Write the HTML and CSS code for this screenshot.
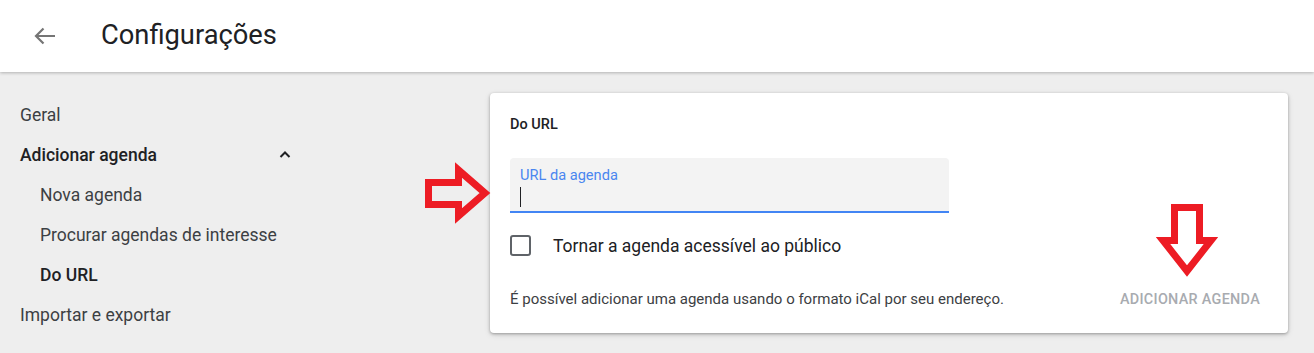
FILE: index.html
```html
<!DOCTYPE html>
<html lang="pt-BR">
    <head>
        <meta charset="UTF-8">
        <meta name="viewport" content="width=device-width, initial-scale=1.0">
        <title>Configurações</title>
        <link rel="stylesheet" href="styles.css">
    </head>
    <body>
        <header class="topbar">
            <button class="back-btn" aria-label="Voltar">
                <svg width="24" height="20" viewBox="0 0 24 20"><path d="M22 10H3M10.5 2.5L3 10l7.5 7.5" fill="none" stroke="#757575" stroke-width="2.2"/></svg>
            </button>
            <h1 class="title">Configurações</h1>
        </header>

        <div class="main">
            <nav class="sidebar">
                <a class="nav-item">Geral</a>
                <a class="nav-item strong">Adicionar agenda
                    <svg class="chevron" width="12" height="8" viewBox="0 0 12 8"><path d="M1.5 7L6 2.5 10.5 7" fill="none" stroke="#202124" stroke-width="2"/></svg>
                </a>
                <a class="nav-item sub">Nova agenda</a>
                <a class="nav-item sub">Procurar agendas de interesse</a>
                <a class="nav-item sub strong">Do URL</a>
                <a class="nav-item">Importar e exportar</a>
            </nav>

            <section class="card">
                <h2 class="card-title">Do URL</h2>
                <div class="field">
                    <label class="field-label">URL da agenda</label>
                    <span class="caret"></span>
                </div>
                <label class="check-row">
                    <span class="checkbox"></span>
                    <span>Tornar a agenda acessível ao público</span>
                </label>
                <div class="card-footer">
                    <p class="hint">É possível adicionar uma agenda usando o formato iCal por seu endereço.</p>
                    <button class="add-btn" disabled>Adicionar agenda</button>
                </div>
            </section>
        </div>

        <!-- red arrows drawn over the screenshot -->
        <svg class="mark mark-right" width="80" height="70" viewBox="420 160 80 70">
            <polygon points="428.5,182.5 458.5,182.5 458.5,170 485,193 458.5,216 458.5,204.5 428.5,204.5" fill="none" stroke="#ed1c24" stroke-width="7"/>
        </svg>
        <svg class="mark mark-down" width="70" height="80" viewBox="1152 200 70 80">
            <polygon points="1174.5,207.5 1199.5,207.5 1199.5,240.5 1211,240.5 1187,271 1163,240.5 1174.5,240.5" fill="none" stroke="#ed1c24" stroke-width="7"/>
        </svg>
    </body>
</html>
```

FILE: styles.css
```css
body {
    margin: 0;
    font-family: Roboto, "Liberation Sans", Arial, sans-serif;
    background-color: #eeeeee;
    color: #202124;
    height: 353px;
    overflow: hidden;
    position: relative;
}
.topbar {
    height: 72px;
    background: white;
    display: flex;
    align-items: center;
    box-shadow: 0 1px 3px rgba(0, 0, 0, 0.25);
    position: relative;
}
.back-btn {
    width: 48px;
    height: 48px;
    margin-left: 21px;
    background: none;
    border: none;
    padding: 0;
    display: flex;
    align-items: center;
    justify-content: center;
}
.title {
    margin: -3px 0 0 32px;
    font-size: 27.3px;
    font-weight: 400;
    color: #202124;
}
.main {
    display: flex;
    padding-top: 21px;
}
.sidebar {
    width: 490px;
    flex-shrink: 0;
    display: flex;
    flex-direction: column;
    padding-top: 2px;
}
.nav-item {
    height: 40px;
    display: flex;
    align-items: center;
    padding-left: 20px;
    width: 271px;
    font-size: 17.5px;
    color: #3c4043;
    justify-content: space-between;
}
.nav-item.sub {
    padding-left: 40px;
    width: 251px;
}
.nav-item.strong {
    font-weight: 500;
    color: #202124;
}
.chevron {
    margin-top: -2px;
}
.card {
    width: 798px;
    height: 240px;
    box-sizing: border-box;
    background: white;
    border-radius: 4px;
    box-shadow: 0 1px 3px rgba(0, 0, 0, 0.3), 0 2px 6px rgba(0, 0, 0, 0.12);
    padding: 22px 23px 0 20px;
    display: flex;
    flex-direction: column;
}
.card-title {
    margin: 0;
    font-size: 14.5px;
    font-weight: 500;
    line-height: 20px;
}
.field {
    margin-top: 23px;
    width: 439px;
    height: 55px;
    flex-shrink: 0;
    box-sizing: border-box;
    background: #f3f3f3;
    border-radius: 4px 4px 0 0;
    border-bottom: 2px solid #4285f4;
    padding: 8px 10px 0;
    display: flex;
    flex-direction: column;
}
.field-label {
    font-size: 14.6px;
    line-height: 18px;
    color: #4a86f0;
}
.caret {
    margin-top: 3px;
    width: 1px;
    height: 20px;
    background: #202124;
}
.check-row {
    margin-top: 12px;
    height: 41px;
    display: flex;
    align-items: center;
    font-size: 17.5px;
    color: #202124;
}
.checkbox {
    width: 17px;
    height: 17px;
    border: 2px solid #5f6368;
    border-radius: 3px;
    margin-right: 22px;
}
.card-footer {
    margin-top: 15px;
    display: flex;
    align-items: center;
    justify-content: space-between;
    height: 36px;
}
.hint {
    margin: 0;
    font-size: 15px;
    color: #3c4043;
}
.add-btn {
    font-family: inherit;
    font-size: 14.4px;
    font-weight: 500;
    text-transform: uppercase;
    letter-spacing: 0.3px;
    color: #a8abb0;
    background: none;
    border: none;
    padding: 0 5px;
}
.mark {
    position: absolute;
}
.mark-right {
    left: 420px;
    top: 160px;
}
.mark-down {
    left: 1152px;
    top: 200px;
}
```
